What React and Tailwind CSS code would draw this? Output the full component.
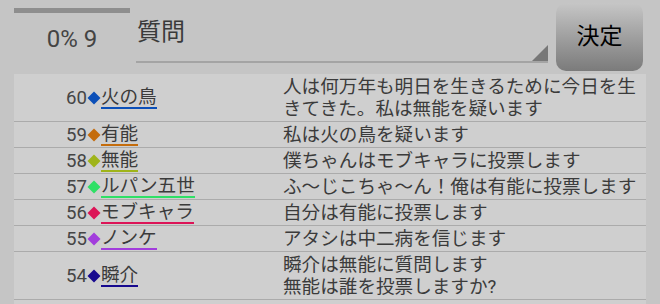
import React from "react";

const rows = [
  { no: 60, name: "火の鳥", color: "#0b4fb8", msg: ["人は何万年も明日を生きるために今日を生", "きてきた。私は無能を疑います"] },
  { no: 59, name: "有能", color: "#c46c0c", msg: ["私は火の鳥を疑います"] },
  { no: 58, name: "無能", color: "#9fb41a", msg: ["僕ちゃんはモブキャラに投票します"] },
  { no: 57, name: "ルパン五世", color: "#2fe066", msg: ["ふ〜じこちゃ〜ん！俺は有能に投票します"] },
  { no: 56, name: "モブキャラ", color: "#dc1457", msg: ["自分は有能に投票します"] },
  { no: 55, name: "ノンケ", color: "#a23ddc", msg: ["アタシは中二病を信じます"] },
  { no: 54, name: "瞬介", color: "#17098f", msg: ["瞬介は無能に質問します", "無能は誰を投票しますか?"] },
];

function Diamond({ color }) {
  return (
    <svg width="14" height="14" viewBox="0 0 14 14" className="shrink-0">
      <polygon points="7,0.5 13.5,7 7,13.5 0.5,7" fill={color} />
    </svg>
  );
}

export default function App() {
  return (
    <div
      className="w-[660px] h-[304px] overflow-hidden bg-[#c5c5c5] text-[#3b3b3b]"
      style={{ fontFamily: "Roboto, 'Noto Sans CJK JP', sans-serif" }}
    >
      {/* Header */}
      <div className="flex h-[74px] pl-[14px]">
        <div className="w-[116px] pt-[8px] flex flex-col items-center">
          <div className="h-[5px] w-full bg-[#8e8e8e]" />
          <div className="mt-[12px] text-[24px] leading-[28px] text-[#444]">0% 9</div>
        </div>
        <div className="relative ml-[6px] w-[412px] h-[63px] border-b-2 border-[#a4a4a4]">
          <div className="pt-[17px] pl-[1px] text-[24px] leading-[30px] text-[#3a3a3a]">質問</div>
          <svg width="16" height="16" viewBox="0 0 16 16" className="absolute right-0 bottom-0">
            <polygon points="16,0 16,16 0,16" fill="#777" />
          </svg>
        </div>
        <div className="ml-[8px] mt-[3px] w-[87px] h-[68px] rounded-[10px] bg-linear-to-b from-[#c6c6c6] to-[#7b7b7b] flex items-center justify-center text-[23px] text-black">
          決定
        </div>
      </div>

      {/* Table */}
      <div className="ml-[14px] w-[632px] bg-[#cfcfcf] text-[18.6px]">
        {rows.map((r) => (
          <div key={r.no} className="flex border-b border-[#ababab] pt-[2px] pb-[1px]">
            <div className="w-[269px] pl-[52px] flex items-center">
              <span className="leading-[22px] text-[#454545]">{r.no}</span>
              <Diamond color={r.color} />
              <span
                className="inline-block leading-[20px] border-b-2"
                style={{ borderColor: r.color }}
              >
                {r.name}
              </span>
            </div>
            <div className="flex-1 leading-[22px] whitespace-nowrap">
              {r.msg.map((m, i) => (
                <div key={i}>{m}</div>
              ))}
            </div>
          </div>
        ))}
        <div className="h-[20px]" />
      </div>
    </div>
  );
}
